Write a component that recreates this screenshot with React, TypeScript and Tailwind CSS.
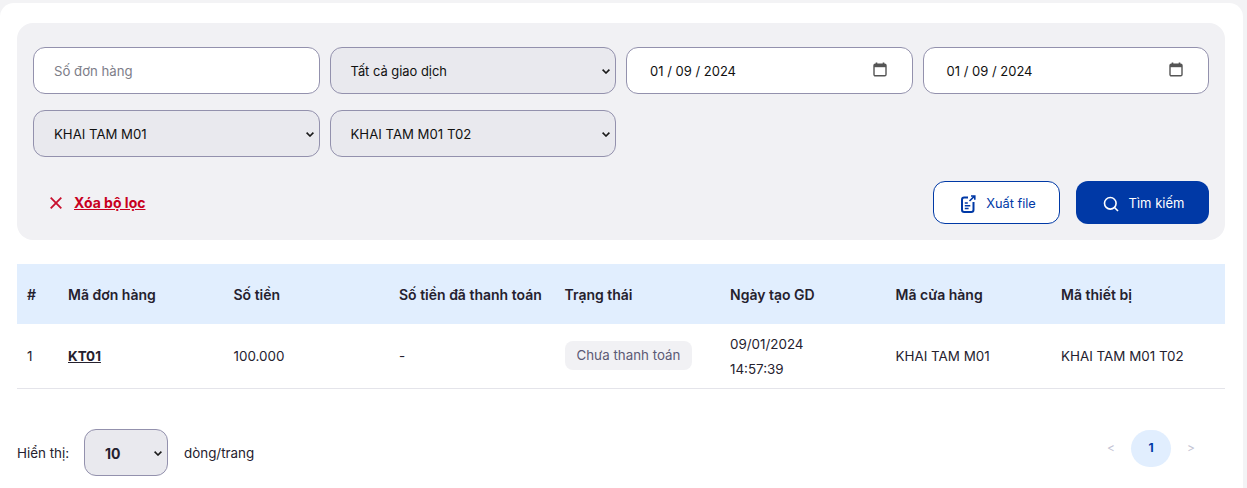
import React from "react";

const font = { fontFamily: 'Inter, "Liberation Sans", sans-serif' };

function Chevron({ className = "" }: { className?: string }) {
  return (
    <svg className={className} width="8" height="5" viewBox="0 0 8 5" fill="none">
      <path d="M0.6 0.6L4 4l3.4-3.4" stroke="#1a1a1a" strokeWidth="1.6" />
    </svg>
  );
}

function Select({ value, small = false }: { value: string; small?: boolean }) {
  return (
    <div className={`relative h-[47px] rounded-[12px] border border-[#9391ad] bg-[#e9e9ee] flex items-center pl-5 pt-[2px] text-[#111] ${small ? "text-[12.9px]" : "text-[13.2px]"}`}>
      <span>{value}</span>
      <Chevron className="absolute right-[5px] top-[21px]" />
    </div>
  );
}

function DateBox() {
  return (
    <div className="relative h-[47px] rounded-[12px] border border-[#9391ad] bg-white flex items-center pl-[23px] pt-[2px] text-[13px] text-[#111]">
      <span>01 / 09 / 2024</span>
      <svg className="absolute right-[25px] top-[14px]" width="14" height="15" viewBox="0 0 14 15" fill="none">
        <path d="M3.5 0.5v2M10.5 0.5v2" stroke="#555" strokeWidth="1.6" />
        <rect x="1" y="2.2" width="12" height="11.6" rx="1.3" stroke="#555" strokeWidth="1.4" />
        <rect x="1" y="2.2" width="12" height="3" fill="#555" />
      </svg>
    </div>
  );
}

const headers = ["Mã đơn hàng", "Số tiền", "Số tiền đã thanh toán", "Trạng thái", "Ngày tạo GD", "Mã cửa hàng", "Mã thiết bị"];

export default function App() {
  return (
    <div className="h-[488px] overflow-hidden bg-[#f3f3f5] pt-[3px] pr-[4px]" style={font}>
      <div className="h-[485px] rounded-tl-[14px] rounded-tr-[14px] bg-white pt-[20px] pl-[17px] pr-[18px]">
        <div className="h-[217px] rounded-[16px] bg-[#f1f1f4] px-[16px] pt-[24px]">
          <div className="grid grid-cols-4 gap-x-[10px] gap-y-[16px]">
            <div className="h-[47px] rounded-[12px] border border-[#9391ad] bg-white flex items-center pl-5 pt-[2px] text-[13.2px] text-[#7d7d88]">Số đơn hàng</div>
            <Select value="Tất cả giao dịch" small />
            <DateBox />
            <DateBox />
            <Select value="KHAI TAM M01" />
            <Select value="KHAI TAM M01 T02" />
          </div>
          <div className="mt-[24px] flex items-center justify-between">
            <div className="flex items-center pl-[17px] gap-[12px] text-[14px] font-bold text-[#c8001e]">
              <svg width="12" height="12" viewBox="0 0 12 12" fill="none">
                <path d="M0.7 0.7l10.6 10.6M11.3 0.7L0.7 11.3" stroke="#c8102e" strokeWidth="1.8" />
              </svg>
              <span className="underline">Xóa bộ lọc</span>
            </div>
            <div className="flex gap-[16px] text-[13px]">
              <div className="h-[43px] w-[127px] rounded-[12px] border border-[#0039a6] bg-white pt-[2px] pl-[3px] text-[12.8px] text-[#0039a6] flex items-center justify-center gap-[10px]">
                <svg width="16" height="18" viewBox="0 0 16 18" fill="none">
                  <rect x="2" y="2.5" width="11.5" height="14.5" rx="2.2" stroke="#0039a6" strokeWidth="2" />
                  <path d="M4.8 8h3M4.8 10.8h5.5M4.8 13.6h3.8" stroke="#0039a6" strokeWidth="1.5" />
                  <rect x="8" y="0" width="8" height="7" fill="#fff" />
                  <path d="M9.5 6L14.5 1.2M11 1h3.8v3.8" stroke="#0039a6" strokeWidth="1.6" />
                </svg>
                <span>Xuất file</span>
              </div>
              <div className="h-[43px] w-[133px] rounded-[12px] bg-[#0039a6] pt-[2px] pl-[2px] text-white flex items-center justify-center gap-[10px]">
                <svg width="16" height="16" viewBox="0 0 16 16" fill="none">
                  <circle cx="7.3" cy="7.3" r="5.8" stroke="#fff" strokeWidth="1.6" />
                  <path d="M11.5 11.5L15 15" stroke="#fff" strokeWidth="1.6" />
                </svg>
                <span>Tìm kiếm</span>
              </div>
            </div>
          </div>
        </div>

        <table className="mt-[24px] w-full table-fixed border-collapse text-[13.4px] text-[#25212e]">
          <colgroup>
            <col className="w-[41px]" />
            <col className="w-[165.5px]" />
            <col className="w-[165.5px]" />
            <col className="w-[165.5px]" />
            <col className="w-[165.5px]" />
            <col className="w-[165.5px]" />
            <col className="w-[165.5px]" />
            <col />
          </colgroup>
          <thead>
            <tr className="h-[60px] bg-[#e1eefe] text-left text-[14px]">
              <th className="pl-[10px] font-semibold">#</th>
              {headers.map((h) => (
                <th key={h} className="pl-[10px] font-semibold whitespace-nowrap">{h}</th>
              ))}
            </tr>
          </thead>
          <tbody>
            <tr className="h-[64px] border-b border-[#e4e4ea]">
              <td className="pl-[10px] pt-[1px]">1</td>
              <td className="pl-[10px] pt-[1px] font-bold underline">KT01</td>
              <td className="pl-[10px] pt-[1px]">100.000</td>
              <td className="pl-[10px] pt-[1px]">-</td>
              <td className="pl-[10px] pb-[1px]">
                <span className="inline-flex h-[29px] items-center rounded-[8px] bg-[#f1f1f4] px-[12px] pt-[1px] text-[13.3px] text-[#5c5a75]">Chưa thanh toán</span>
              </td>
              <td className="pl-[10px] pt-[3px] leading-[25px]">09/01/2024<br />14:57:39</td>
              <td className="pl-[10px] pt-[1px]">KHAI TAM M01</td>
              <td className="pl-[10px] pt-[1px]">KHAI TAM M01 T02</td>
            </tr>
          </tbody>
        </table>

        <div className="mt-[40px] flex items-start justify-between text-[13.4px] text-[#25212e]">
          <div className="flex items-center">
            <span className="w-[51px] whitespace-nowrap pt-[2px]">Hiển thị:</span>
            <div className="relative ml-[16px] flex h-[47px] w-[84px] items-center rounded-[12px] border border-[#9391ad] bg-[#e9e9ee] pl-[20px] pt-[2px] text-[14px] font-bold">
              <span>10</span>
              <Chevron className="absolute right-[5px] top-[21px]" />
            </div>
            <span className="ml-[16px] pt-[2px]">dòng/trang</span>
          </div>
          <div className="mr-[14px] mt-[1px] flex items-center text-[12px]">
            <span className="w-[40px] text-center text-[#c4c4d4]">&lt;</span>
            <span className="flex h-[37px] w-[40px] items-center justify-center rounded-full bg-[#e1eefe] font-bold text-[#0039a6]">1</span>
            <span className="w-[40px] text-center text-[#c4c4d4]">&gt;</span>
          </div>
        </div>
      </div>
    </div>
  );
}
